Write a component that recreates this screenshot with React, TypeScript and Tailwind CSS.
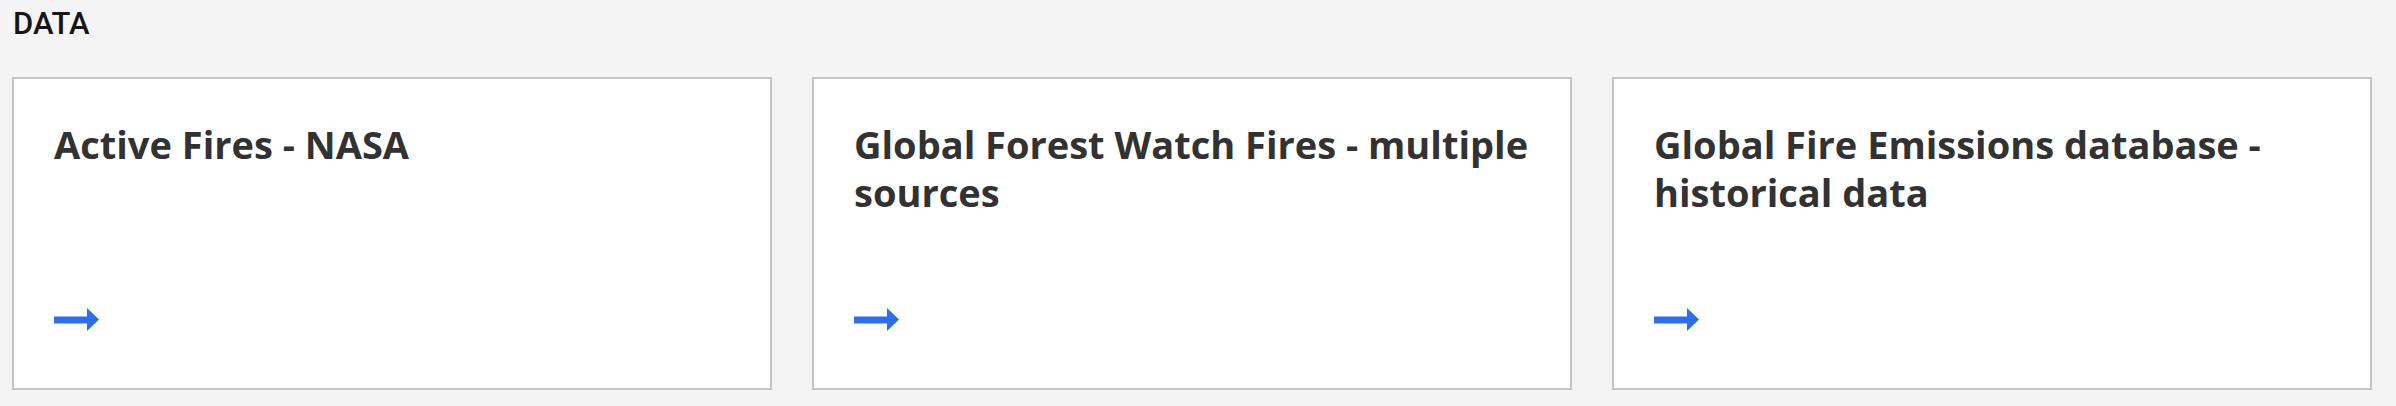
const cards = [
  { title: "Active Fires - NASA" },
  { title: "Global Forest Watch Fires - multiple sources" },
  { title: "Global Fire Emissions database - historical data" },
];

const ArrowIcon = () => (
  <svg width="46" height="24" viewBox="0 0 46 24" fill="#2b6ef0">
    <rect x="0" y="8.5" width="34" height="7" />
    <polygon points="33,0 45,11.5 33,23" />
  </svg>
);

export default function App() {
  return (
    <div className="min-h-[406px] w-full bg-[#f4f4f4] pl-[12px] pr-[24px] pt-[8px]">
      <h2 className="pl-[1px] text-[31px] font-medium leading-[31px] text-[#161616] [font-family:Roboto,'Liberation_Sans',sans-serif]">
        DATA
      </h2>
      <div className="mt-[38px] grid grid-cols-3 gap-[40px]">
        {cards.map((card) => (
          <a
            key={card.title}
            href="#"
            className="flex h-[313px] flex-col border-2 border-[#c6c6c6] bg-white px-[40px] pt-[41px] pb-[56px]"
          >
            <h3 className="text-[38px] font-bold leading-[48px] text-[#323232] [font-family:'Open_Sans',sans-serif]">
              {card.title}
            </h3>
            <div className="mt-auto">
              <ArrowIcon />
            </div>
          </a>
        ))}
      </div>
    </div>
  );
}
